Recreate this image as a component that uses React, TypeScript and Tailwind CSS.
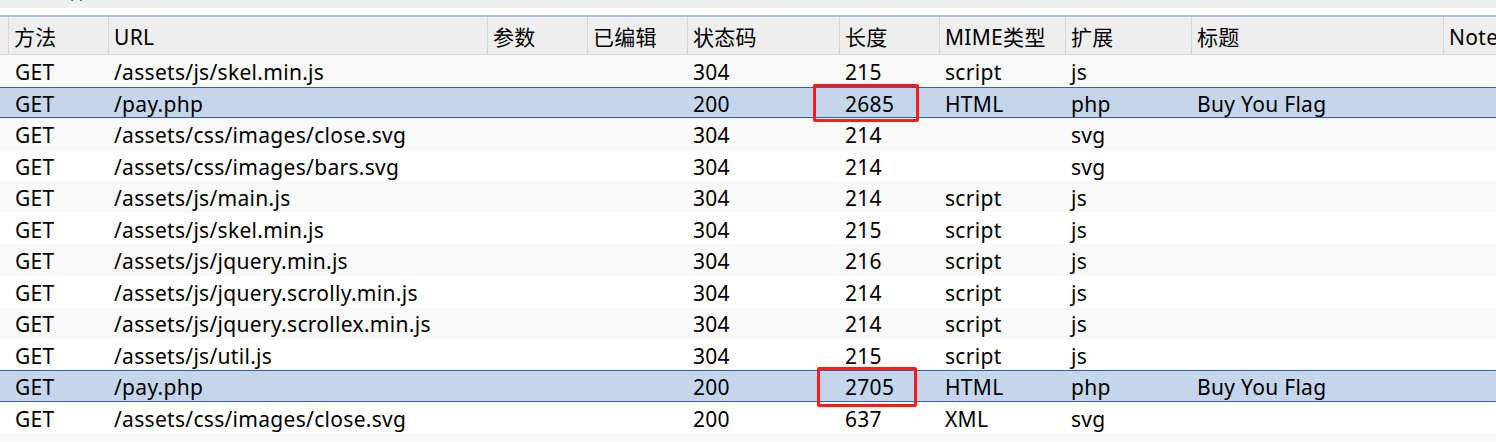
import React from "react";

const cols = [
  { key: "method", label: "方法", w: "w-[100px]" },
  { key: "url", label: "URL", w: "w-[379px]" },
  { key: "params", label: "参数", w: "w-[100px]" },
  { key: "edited", label: "已编辑", w: "w-[100px]" },
  { key: "status", label: "状态码", w: "w-[152px]" },
  { key: "length", label: "长度", w: "w-[100px]" },
  { key: "mime", label: "MIME类型", w: "w-[126px]" },
  { key: "ext", label: "扩展", w: "w-[126px]" },
  { key: "title", label: "标题", w: "w-[252px]" },
  { key: "note", label: "Notes", w: "w-[120px]" },
];

type Row = {
  url: string;
  status: string;
  length: string;
  mime: string;
  ext: string;
  title?: string;
  sel?: boolean;
};

const rows: Row[] = [
  { url: "/assets/js/skel.min.js", status: "304", length: "215", mime: "script", ext: "js" },
  { url: "/pay.php", status: "200", length: "2685", mime: "HTML", ext: "php", title: "Buy You Flag", sel: true },
  { url: "/assets/css/images/close.svg", status: "304", length: "214", mime: "", ext: "svg" },
  { url: "/assets/css/images/bars.svg", status: "304", length: "214", mime: "", ext: "svg" },
  { url: "/assets/js/main.js", status: "304", length: "214", mime: "script", ext: "js" },
  { url: "/assets/js/skel.min.js", status: "304", length: "215", mime: "script", ext: "js" },
  { url: "/assets/js/jquery.min.js", status: "304", length: "216", mime: "script", ext: "js" },
  { url: "/assets/js/jquery.scrolly.min.js", status: "304", length: "214", mime: "script", ext: "js" },
  { url: "/assets/js/jquery.scrollex.min.js", status: "304", length: "214", mime: "script", ext: "js" },
  { url: "/assets/js/util.js", status: "304", length: "215", mime: "script", ext: "js" },
  { url: "/pay.php", status: "200", length: "2705", mime: "HTML", ext: "php", title: "Buy You Flag", sel: true },
  { url: "/assets/css/images/close.svg", status: "200", length: "637", mime: "XML", ext: "svg" },
  { url: "", status: "", length: "", mime: "", ext: "" },
];

export default function App() {
  return (
    <div
      className="relative w-[1496px] h-[442px] overflow-hidden bg-white text-black text-[21px] tracking-[0.3px] leading-none"
      style={{ fontFamily: '"Noto Sans", "Noto Sans CJK SC", sans-serif' }}
    >
      {/* top strip */}
      <div className="h-[8px] bg-[#f0f0f0] overflow-hidden relative">
        <span className="absolute left-[-6px] top-[-18px] text-[20px] text-black">过</span>
        <span className="absolute left-[68px] top-[-18px] text-[20px] text-black">件</span>
      </div>
      <div className="h-[7px] bg-white" />
      <div className="h-[2px] bg-[#a8c4e6]" />
      {/* header */}
      <div className="flex h-[38px] bg-[#eeeeee] border-b border-[#d6d6d6] whitespace-nowrap">
        <div className="w-[8px] shrink-0" />
        {cols.map((c) => (
          <div
            key={c.key}
            className={`${c.w} shrink-0 border-l border-[#d6d6d6] pl-[5px] pt-[3px] flex items-center`}
          >
            {c.label}
          </div>
        ))}
      </div>
      {/* rows */}
      <div className="flex flex-col">
        {rows.map((r, i) => (
          <div
            key={i}
            className={`relative flex h-[31.5px] shrink-0 whitespace-nowrap pt-[4px] ${
              r.sel
                ? "bg-[#c5d6ec] border-y border-[#2c64a4]"
                : i % 2 === 0
                ? "bg-[#f9f9f9]"
                : "bg-white"
            }`}
          >
            <div className="w-[8px] shrink-0" />
            <div className="w-[100px] shrink-0 pl-[7px] flex items-center">{r.url ? "GET" : ""}</div>
            <div className="w-[379px] shrink-0 pl-[6px] flex items-center">{r.url}</div>
            <div className="w-[100px] shrink-0" />
            <div className="w-[100px] shrink-0" />
            <div className="w-[152px] shrink-0 pl-[6px] flex items-center">{r.status}</div>
            <div className="w-[100px] shrink-0 pl-[6px] flex items-center">{r.length}</div>
            <div className="w-[126px] shrink-0 pl-[6px] flex items-center">{r.mime}</div>
            <div className="w-[126px] shrink-0 pl-[6px] flex items-center">{r.ext}</div>
            <div className="w-[252px] shrink-0 pl-[6px] flex items-center">{r.title ?? ""}</div>
          </div>
        ))}
      </div>
      {/* red annotation boxes */}
      <div className="absolute left-[813px] top-[84px] w-[106px] h-[38px] border-[3px] border-[#ff1a1a] rounded-[2px]" />
      <div className="absolute left-[817px] top-[367px] w-[100px] h-[40px] border-[3px] border-[#ff1a1a] rounded-[2px]" />
    </div>
  );
}
